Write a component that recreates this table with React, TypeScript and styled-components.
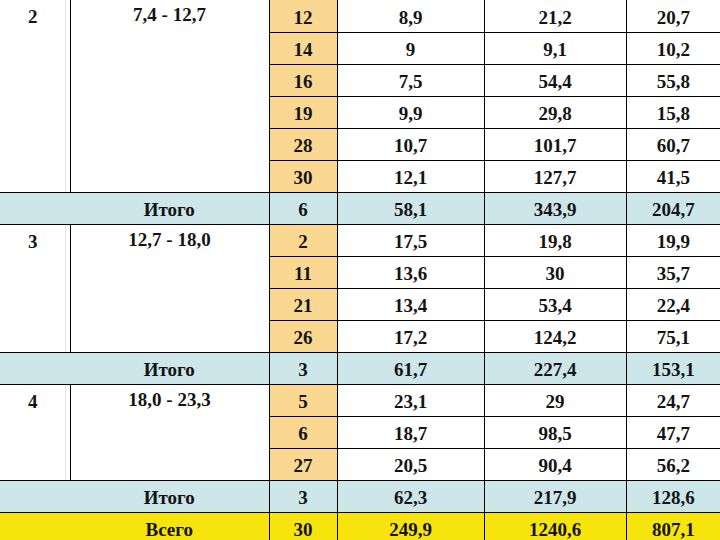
import React from 'react';
import styled, { createGlobalStyle } from 'styled-components';

const GlobalStyle = createGlobalStyle`
  html, body {
    margin: 0;
    padding: 0;
    background: #ffffff;
  }
  body {
    font-family: "Liberation Serif", "Times New Roman", serif;
    overflow: hidden;
  }
`;

type Tone = 'plain' | 'peach' | 'blue' | 'yellow';

const toneColors: Record<Tone, string> = {
  plain: '#ffffff',
  peach: '#fad891',
  blue: '#cde6ea',
  yellow: '#f6e40c',
};

const Table = styled.table`
  width: 720px;
  border-collapse: collapse;
  table-layout: fixed;
  font-family: "Liberation Serif", "Times New Roman", serif;
  font-size: 19px;
  font-weight: bold;
  color: #141414;

  tr:first-child td {
    border-top: none;
  }
  td:last-child {
    border-right: none;
  }
`;

const Row = styled.tr`
  height: 32px;
`;

const Cell = styled.td<{ $tone?: Tone }>`
  padding: 3px 0 0 0;
  border: 1px solid #000;
  text-align: center;
  vertical-align: middle;
  line-height: 27px;
  background: ${(p) => toneColors[p.$tone ?? 'plain']};
`;

// group number column, with the faint grey rule just left of the black one
const GroupCell = styled.td`
  padding: 3px 4px 0 0;
  border: 1px solid #000;
  border-left: none;
  border-top: none;
  border-bottom: none;
  text-align: center;
  vertical-align: top;
  line-height: 27px;
  box-shadow: inset -4px 0 0 #fff, inset -5px 0 0 #e4e4e4;
`;

const RangeCell = styled.td`
  padding: 1px 0 0 0;
  border: 1px solid #000;
  border-top: none;
  border-bottom: none;
  text-align: center;
  vertical-align: top;
  line-height: 27px;
`;

const LabelCell = styled(Cell)`
  border-left: none;
  padding-left: 70px;
`;

type DataRow = [number, string, string, string];

const groups: { id: number; range: string; rows: DataRow[]; total: DataRow }[] = [
  {
    id: 2,
    range: '7,4 - 12,7',
    rows: [
      [12, '8,9', '21,2', '20,7'],
      [14, '9', '9,1', '10,2'],
      [16, '7,5', '54,4', '55,8'],
      [19, '9,9', '29,8', '15,8'],
      [28, '10,7', '101,7', '60,7'],
      [30, '12,1', '127,7', '41,5'],
    ],
    total: [6, '58,1', '343,9', '204,7'],
  },
  {
    id: 3,
    range: '12,7 - 18,0',
    rows: [
      [2, '17,5', '19,8', '19,9'],
      [11, '13,6', '30', '35,7'],
      [21, '13,4', '53,4', '22,4'],
      [26, '17,2', '124,2', '75,1'],
    ],
    total: [3, '61,7', '227,4', '153,1'],
  },
  {
    id: 4,
    range: '18,0 - 23,3',
    rows: [
      [5, '23,1', '29', '24,7'],
      [6, '18,7', '98,5', '47,7'],
      [27, '20,5', '90,4', '56,2'],
    ],
    total: [3, '62,3', '217,9', '128,6'],
  },
];

const grandTotal: DataRow = [30, '249,9', '1240,6', '807,1'];

const App: React.FC = () => {
  return (
    <>
      <GlobalStyle />
      <Table>
        <colgroup>
          <col style={{ width: 70 }} />
          <col style={{ width: 199 }} />
          <col style={{ width: 68 }} />
          <col style={{ width: 147 }} />
          <col style={{ width: 142 }} />
          <col style={{ width: 94 }} />
        </colgroup>
        <tbody>
          {groups.map((g) => (
            <React.Fragment key={g.id}>
              {g.rows.map((r, i) => (
                <Row key={i}>
                  {i === 0 && (
                    <>
                      <GroupCell rowSpan={g.rows.length}>{g.id}</GroupCell>
                      <RangeCell rowSpan={g.rows.length}>{g.range}</RangeCell>
                    </>
                  )}
                  <Cell $tone="peach">{r[0]}</Cell>
                  <Cell>{r[1]}</Cell>
                  <Cell>{r[2]}</Cell>
                  <Cell>{r[3]}</Cell>
                </Row>
              ))}
              <Row>
                <LabelCell colSpan={2} $tone="blue">Итого</LabelCell>
                <Cell $tone="blue">{g.total[0]}</Cell>
                <Cell $tone="blue">{g.total[1]}</Cell>
                <Cell $tone="blue">{g.total[2]}</Cell>
                <Cell $tone="blue">{g.total[3]}</Cell>
              </Row>
            </React.Fragment>
          ))}
          <Row>
            <LabelCell colSpan={2} $tone="yellow">Всего</LabelCell>
            <Cell $tone="yellow">{grandTotal[0]}</Cell>
            <Cell $tone="yellow">{grandTotal[1]}</Cell>
            <Cell $tone="yellow">{grandTotal[2]}</Cell>
            <Cell $tone="yellow">{grandTotal[3]}</Cell>
          </Row>
        </tbody>
      </Table>
    </>
  );
};

export default App;
